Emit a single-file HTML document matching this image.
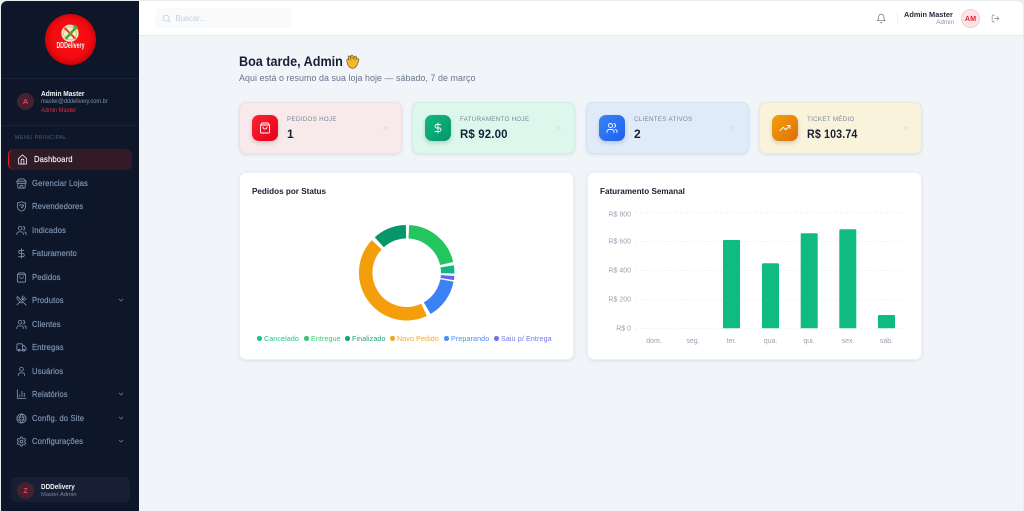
<!DOCTYPE html>
<html lang="pt-BR"><head><meta charset="utf-8"><title>Dashboard</title>
<style>
*{box-sizing:border-box}
html,body{margin:0;width:1024px;height:511px;overflow:hidden;background:#e9ebee;font-family:"Liberation Sans",sans-serif}
#app{position:absolute;left:1px;top:1px;width:1022px;height:510px;background:#f1f5f9;border-radius:6px 6px 0 0;overflow:hidden}
.abs,.t{position:absolute}
.t{white-space:nowrap;line-height:1;transform-origin:left center}
#side{position:absolute;left:0;top:0;width:138px;height:510px;background:#0e1729}
.hr{position:absolute;left:0;width:138px;height:1px;background:#17223a}
.nav{position:absolute;left:31px;margin-top:.5px;font-size:8.1px;color:#8397b5;line-height:10px;letter-spacing:.12px;white-space:nowrap;transform:scaleX(.95);transform-origin:left center;-webkit-text-stroke:.15px currentColor}
.ni{position:absolute;left:14.5px;width:11px;height:11px;fill:none;stroke:#8397b5;stroke-width:1.8;stroke-linecap:round;stroke-linejoin:round}
.ch{position:absolute;left:116px;width:8px;height:8px;fill:none;stroke:#71839f;stroke-width:2;stroke-linecap:round;stroke-linejoin:round}
#top{position:absolute;left:138px;top:0;width:884px;height:35px;background:#fff;border-bottom:1px solid #e6eaf0}
.card{position:absolute;top:101px;height:52px;border-radius:7px;box-shadow:0 1px 3px rgba(15,23,42,.09);border:1px solid rgba(148,163,184,.12)}
.ic{position:absolute;left:12px;top:12px;width:26px;height:26px;border-radius:7px;box-shadow:0 2px 4px rgba(15,23,42,.18)}
.ic svg{position:absolute;left:7px;top:7px;width:12px;height:12px;fill:none;stroke:#fff;stroke-width:1.8;stroke-linecap:round;stroke-linejoin:round}
.lb{position:absolute;left:47px;top:13px;font-size:6.6px;letter-spacing:.35px;color:#7b8698;white-space:nowrap;line-height:8px;transform:scaleX(.935);transform-origin:left center}
.val{position:absolute;left:47px;top:24px;font-size:12px;font-weight:700;color:#172033;white-space:nowrap;line-height:14px;letter-spacing:.15px;transform-origin:left center}
.ar{position:absolute;left:141.5px;top:22.5px;width:6px;height:6px;fill:none;stroke:#d3d9e1;stroke-width:2.6}
.panel{position:absolute;top:171px;width:335px;height:188px;background:#fff;border-radius:7px;box-shadow:0 1px 3px rgba(15,23,42,.09);border:1px solid #eef1f5}
.pt{position:absolute;left:12px;top:13px;font-size:8.7px;font-weight:700;color:#172033;line-height:10px;white-space:nowrap;transform:scaleX(.935);transform-origin:left center}
.lg{position:absolute;top:162px;font-size:7.1px;line-height:9px;white-space:nowrap;letter-spacing:.12px;opacity:.9}
.lg i{display:inline-block;width:4.5px;height:4.5px;border-radius:50%;margin-right:2.5px;vertical-align:.5px;background:currentColor}
</style></head><body>
<svg width="0" height="0" style="position:absolute">
<symbol id="home" viewBox="0 0 24 24"><path d="M3 10l9-8 9 8v10a2 2 0 0 1-2 2H5a2 2 0 0 1-2-2z"/><path d="M9 22v-8a3 3 0 0 1 6 0v8"/></symbol>
<symbol id="store" viewBox="0 0 24 24"><path d="m2 7 4.41-4.41A2 2 0 0 1 7.83 2h8.34a2 2 0 0 1 1.42.59L22 7"/><path d="M4 12v8a2 2 0 0 0 2 2h12a2 2 0 0 0 2-2v-8"/><path d="M15 22v-4a2 2 0 0 0-2-2h-2a2 2 0 0 0-2 2v4"/><path d="M2 7h20"/><path d="M22 7v3a2 2 0 0 1-2 2 2.7 2.7 0 0 1-2-1 2.7 2.7 0 0 1-2 1 2.7 2.7 0 0 1-2-1 2.7 2.7 0 0 1-2 1 2.7 2.7 0 0 1-2-1 2.7 2.7 0 0 1-2 1 2.7 2.7 0 0 1-2-1 2.7 2.7 0 0 1-2 1 2 2 0 0 1-2-2V7"/></symbol>
<symbol id="shield" viewBox="0 0 24 24"><path d="M21 12c0 6-4 8.500-8.700 10a1 1 0 0 1-.6 0C7 20.500 3 18 3 12V5a1 1 0 0 1 1-1c2.500 0 5.500-.8 7.400-2.200a1 1 0 0 1 1.200 0C14.500 3.200 17.500 4 20 4a1 1 0 0 1 1 1z"/><path d="M7 10l3-2 3 1.500 2-1.500 2 2-4 5-2-1.500"/></symbol>
<symbol id="users" viewBox="0 0 24 24"><path d="M16 21v-2a4 4 0 0 0-4-4H6a4 4 0 0 0-4 4v2"/><circle cx="9" cy="7" r="4"/><path d="M22 21v-2a4 4 0 0 0-3-3.870"/><path d="M16 3.130a4 4 0 0 1 0 7.750"/></symbol>
<symbol id="dollar" viewBox="0 0 24 24"><path d="M12 2v20"/><path d="M17 5H9.500a3.500 3.500 0 0 0 0 7h5a3.500 3.500 0 0 1 0 7H6"/></symbol>
<symbol id="bag" viewBox="0 0 24 24"><path d="M16 10a4 4 0 0 1-8 0"/><path d="M3.100 6h17.800"/><path d="M3.400 5.470a2 2 0 0 0-.4 1.200V20a2 2 0 0 0 2 2h14a2 2 0 0 0 2-2V6.670a2 2 0 0 0-.4-1.200l-2-2.670A2 2 0 0 0 17 2H7a2 2 0 0 0-1.600.8z"/></symbol>
<symbol id="utensils" viewBox="0 0 24 24"><path d="m16 2-2.300 2.300a3 3 0 0 0 0 4.200l1.800 1.800a3 3 0 0 0 4.200 0L22 8"/><path d="M15 15 3.300 3.300a4.200 4.200 0 0 0 0 6l7.300 7.300c.7.7 2 .7 2.800 0L15 15Zm0 0 7 7"/><path d="m2.100 21.800 6.400-6.300"/><path d="m19 5-7 7"/></symbol>
<symbol id="truck" viewBox="0 0 24 24"><path d="M14 18V6a2 2 0 0 0-2-2H4a2 2 0 0 0-2 2v11a1 1 0 0 0 1 1h2"/><path d="M15 18H9"/><path d="M19 18h2a1 1 0 0 0 1-1v-3.650a1 1 0 0 0-.22-.62l-3.480-4.350A1 1 0 0 0 17.520 8H14"/><circle cx="17" cy="18" r="2"/><circle cx="7" cy="18" r="2"/></symbol>
<symbol id="user" viewBox="0 0 24 24"><path d="M19 21v-2a4 4 0 0 0-4-4H9a4 4 0 0 0-4 4v2"/><circle cx="12" cy="7" r="4"/></symbol>
<symbol id="chart" viewBox="0 0 24 24"><path d="M3 2v18a1 1 0 0 0 1 1h18"/><path d="M8 17v-4"/><path d="M13 17V5"/><path d="M18 17V9"/></symbol>
<symbol id="globe" viewBox="0 0 24 24"><circle cx="12" cy="12" r="10"/><path d="M12 2a14.500 14.500 0 0 0 0 20 14.500 14.500 0 0 0 0-20"/><path d="M2 9h20M2 15h20"/></symbol>
<symbol id="gear" viewBox="0 0 24 24"><path d="M12.220 2h-.44a2 2 0 0 0-2 2v.18a2 2 0 0 1-1 1.730l-.43.25a2 2 0 0 1-2 0l-.15-.08a2 2 0 0 0-2.730.73l-.22.38a2 2 0 0 0 .73 2.730l.15.1a2 2 0 0 1 1 1.720v.51a2 2 0 0 1-1 1.740l-.15.09a2 2 0 0 0-.73 2.730l.22.38a2 2 0 0 0 2.730.73l.15-.08a2 2 0 0 1 2 0l.43.25a2 2 0 0 1 1 1.730V20a2 2 0 0 0 2 2h.44a2 2 0 0 0 2-2v-.18a2 2 0 0 1 1-1.730l.43-.25a2 2 0 0 1 2 0l.15.08a2 2 0 0 0 2.730-.73l.22-.39a2 2 0 0 0-.73-2.730l-.15-.08a2 2 0 0 1-1-1.740v-.5a2 2 0 0 1 1-1.740l.15-.09a2 2 0 0 0 .73-2.730l-.22-.38a2 2 0 0 0-2.730-.73l-.15.08a2 2 0 0 1-2 0l-.43-.25a2 2 0 0 1-1-1.730V4a2 2 0 0 0-2-2z"/><circle cx="12" cy="12" r="3"/></symbol>
<symbol id="chev" viewBox="0 0 24 24"><path d="m6 9 6 6 6-6"/></symbol>
<symbol id="arrow" viewBox="0 0 24 24"><path d="M4 20 20 4"/><path d="M6 4h14v14"/></symbol>
</svg>

<div id="app">
<div id="side">
  <svg class="abs" style="left:43px;top:12px" width="53" height="53" viewBox="0 0 53 53">
    <defs><radialGradient id="rg" cx="50%" cy="48%" r="52%"><stop offset="0" stop-color="#ff0f14"/><stop offset=".72" stop-color="#f30a10"/><stop offset="1" stop-color="#c90409"/></radialGradient></defs>
    <circle cx="26.500" cy="26.500" r="25.500" fill="url(#rg)"/>
    <circle cx="26" cy="20.300" r="8.500" fill="#f3eddc" stroke="#b9b39d" stroke-width=".6"/>
    <circle cx="26" cy="20.300" r="6.500" fill="none" stroke="#e4c95a" stroke-width="1.200"/>
    <path d="M20.500 14.800l11 11" stroke="#e53935" stroke-width="2"/>
    <path d="M21.500 26l9.500-10.500" stroke="#55a52b" stroke-width="2.600"/>
    <path d="M29 13.500l3 3 2-2-3-3z" fill="#55a52b"/>
    <text x="26.500" y="35" text-anchor="middle" font-family="Liberation Sans" font-weight="700" font-size="8" fill="#fff" textLength="28" lengthAdjust="spacingAndGlyphs" style="filter:drop-shadow(.4px .6px 0 #7d0a0a)">DDDelivery</text>
  </svg>
  <div class="hr" style="top:77px"></div>
  <div class="abs" style="left:16px;top:92px;width:17px;height:17px;border-radius:50%;background:#472032;color:#f43f4e;font-size:7.500px;font-weight:700;text-align:center;line-height:17px">A</div>
  <div class="t" style="left:40px;top:88.500px;font-size:7.200px;font-weight:700;color:#f1f5f9;transform:scaleX(.915)">Admin Master</div>
  <div class="t" style="left:40px;top:97.500px;font-size:6.300px;color:#7f90aa;transform:scaleX(.89)">master@dddelivery.com.br</div>
  <div class="t" style="left:40px;top:106.500px;font-size:6.200px;color:#e8283a;transform:scaleX(.92)">Admin Master</div>
  <div class="hr" style="top:124px"></div>
  <div class="t" style="left:14px;top:135px;font-size:5.700px;letter-spacing:.55px;color:#4e5f7a;transform:scaleX(.93)">MENU PRINCIPAL</div>

  <div class="abs" style="left:7px;top:148px;width:124px;height:21px;background:#331a29;border-radius:6px;border-left:1.500px solid #e11d2e"></div>
  <svg class="ni" style="top:153px;left:15.500px;stroke:#e8edf4"><use href="#home"/></svg>
  <div class="nav" style="top:153.500px;left:32.500px;color:#f1f5f9">Dashboard</div>

  <svg class="ni" style="top:177px"><use href="#store"/></svg><div class="nav" style="top:177px">Gerenciar Lojas</div>
  <svg class="ni" style="top:200px"><use href="#shield"/></svg><div class="nav" style="top:200.500px">Revendedores</div>
  <svg class="ni" style="top:224px"><use href="#users"/></svg><div class="nav" style="top:224px">Indicados</div>
  <svg class="ni" style="top:247px"><use href="#dollar"/></svg><div class="nav" style="top:247.500px">Faturamento</div>
  <svg class="ni" style="top:271px"><use href="#bag"/></svg><div class="nav" style="top:271px">Pedidos</div>
  <svg class="ni" style="top:294px"><use href="#utensils"/></svg><div class="nav" style="top:294.500px">Produtos</div><svg class="ch" style="top:295px"><use href="#chev"/></svg>
  <svg class="ni" style="top:318px"><use href="#users"/></svg><div class="nav" style="top:318px">Clientes</div>
  <svg class="ni" style="top:341px"><use href="#truck"/></svg><div class="nav" style="top:341.500px">Entregas</div>
  <svg class="ni" style="top:365px"><use href="#user"/></svg><div class="nav" style="top:365px">Usuários</div>
  <svg class="ni" style="top:388px"><use href="#chart"/></svg><div class="nav" style="top:388.500px">Relatórios</div><svg class="ch" style="top:389px"><use href="#chev"/></svg>
  <svg class="ni" style="top:412px"><use href="#globe"/></svg><div class="nav" style="top:412px">Config. do Site</div><svg class="ch" style="top:412.500px"><use href="#chev"/></svg>
  <svg class="ni" style="top:435px"><use href="#gear"/></svg><div class="nav" style="top:435.500px">Configurações</div><svg class="ch" style="top:436px"><use href="#chev"/></svg>

  <div class="abs" style="left:10px;top:476px;width:119px;height:25px;background:#161f33;border-radius:5px"></div>
  <div class="abs" style="left:16px;top:480.500px;width:17px;height:17px;border-radius:50%;background:#472032;color:#f43f4e;font-size:7.500px;font-weight:700;text-align:center;line-height:17px">Z</div>
  <div class="t" style="left:40px;top:481.500px;font-size:7.200px;font-weight:700;color:#f1f5f9;transform:scaleX(.88)">DDDelivery</div>
  <div class="t" style="left:40px;top:491.500px;font-size:5.800px;color:#7486a1">Master Admin</div>
</div>

<div id="top">
  <div class="abs" style="left:16px;top:7px;width:137px;height:20px;background:#f8fafc;border-radius:5px"></div>
  <svg class="abs" style="left:23px;top:13px;stroke:#c3ccd8;fill:none;stroke-width:2;stroke-linecap:round" width="9" height="9" viewBox="0 0 24 24"><circle cx="11" cy="11" r="8"/><path d="m21 21-4.300-4.300"/></svg>
  <div class="t" style="left:36.500px;top:13.500px;font-size:7.800px;color:#c8d0db">Buscar...</div>
  <svg class="abs" style="left:737px;top:12px;stroke:#5f6e84;fill:none;stroke-width:1.600;stroke-linecap:round;stroke-linejoin:round" width="10.500" height="11" viewBox="0 0 24 24"><path d="M6 8a6 6 0 0 1 12 0c0 7 3 9 3 9H3s3-2 3-9"/><path d="M10.300 21a1.940 1.940 0 0 0 3.400 0"/></svg>
  <div class="abs" style="left:758px;top:11px;width:1px;height:13px;background:#edf0f4"></div>
  <div class="t" style="left:765px;top:10px;font-size:7.400px;font-weight:700;color:#1e293b">Admin Master</div>
  <div class="t" style="right:69px;top:19px;font-size:6.300px;color:#8a96a8">Admin</div>
  <div class="abs" style="left:822px;top:8px;width:19px;height:19px;border-radius:50%;background:#fde4e6;border:1px solid #fbc9cd;color:#ea1f2f;font-size:7.200px;font-weight:700;text-align:center;line-height:17px">AM</div>
  <svg class="abs" style="left:852px;top:13px;stroke:#7b8899;fill:none;stroke-width:1.700;stroke-linecap:round;stroke-linejoin:round" width="9" height="9" viewBox="0 0 24 24"><path d="M9 21H5a2 2 0 0 1-2-2V5a2 2 0 0 1 2-2h4"/><path d="M16 17l5-5-5-5"/><path d="M21 12H9"/></svg>
</div>

<div class="t" style="left:238px;top:53px;font-size:14px;font-weight:700;color:#172033;transform:scaleX(.9)">Boa tarde, Admin</div>
<svg class="abs" style="left:344px;top:53px" width="15" height="15" viewBox="0 0 15 15"><path d="M2 8Q1 5 3 5L4 6 3 3Q3 1.500 4.800 2L6 4.500 5.800 2Q6 .8 7.600 1.200L9 4 9.500 2.500Q10.500 1.500 11.500 2.800L11.500 5 13 4.500Q14.300 5 13.800 6.500L12.500 10Q11 14.500 7 14.300 3.500 14 2 8z" fill="#f5b92e" stroke="#6b4a12" stroke-width=".6"/><path d="M5 3.500l1.500 3M7.500 3l1 3M10 4l.2 2.500" stroke="#8a6112" stroke-width=".5" fill="none"/></svg>
<div class="t" style="left:238px;top:73px;font-size:9.600px;color:#66738a;letter-spacing:.06px;transform:scaleX(.925)">Aqui está o resumo da sua loja hoje — sábado, 7 de março</div>

<div class="card" style="left:238px;width:163px;background:#f8e9ea">
  <div class="ic" style="background:linear-gradient(135deg,#ff2230,#e3001b)"><svg><use href="#bag"/></svg></div>
  <div class="lb">PEDIDOS HOJE</div><div class="val">1</div>
  <svg class="ar"><use href="#arrow"/></svg>
</div>
<div class="card" style="left:411px;width:163px;background:#dcf7eb">
  <div class="ic" style="background:linear-gradient(135deg,#10b981,#059669)"><svg><use href="#dollar"/></svg></div>
  <div class="lb">FATURAMENTO HOJE</div><div class="val" style="transform:scaleX(.955)">R$ 92.00</div>
  <svg class="ar"><use href="#arrow"/></svg>
</div>
<div class="card" style="left:585px;width:163px;background:#e0ebfa">
  <div class="ic" style="background:linear-gradient(135deg,#3b82f6,#1a62f0)"><svg><use href="#users"/></svg></div>
  <div class="lb">CLIENTES ATIVOS</div><div class="val">2</div>
  <svg class="ar"><use href="#arrow"/></svg>
</div>
<div class="card" style="left:758px;width:163px;background:#f9f3dc">
  <div class="ic" style="background:linear-gradient(135deg,#f59e0b,#dd6f06)"><svg viewBox="0 0 24 24"><path d="M22 7l-8.500 8.500-5-5L2 17"/><path d="M16 7h6v6"/></svg></div>
  <div class="lb">TICKET MÉDIO</div><div class="val" style="transform:scaleX(.89)">R$ 103.74</div>
  <svg class="ar"><use href="#arrow"/></svg>
</div>

<div class="panel" style="left:238px">
  <div class="pt">Pedidos por Status</div>
  <svg class="abs" style="left:0;top:0" width="333" height="186" fill="none" stroke-width="13.500">
    <g transform="translate(166.700 99.700)">
      <circle r="41" pathLength="360" stroke="#22c55e" stroke-dasharray="74 400" transform="rotate(-87)"/>
      <circle r="41" pathLength="360" stroke="#10b981" stroke-dasharray="10 400" transform="rotate(-9)"/>
      <circle r="41" pathLength="360" stroke="#6366f1" stroke-dasharray="5 400" transform="rotate(4)"/>
      <circle r="41" pathLength="360" stroke="#3b82f6" stroke-dasharray="49 400" transform="rotate(11)"/>
      <circle r="41" pathLength="360" stroke="#f59e0b" stroke-dasharray="158 400" transform="rotate(65)"/>
      <circle r="41" pathLength="360" stroke="#059669" stroke-dasharray="41 400" transform="rotate(228)"/>
    </g>
  </svg>
  <div class="lg" style="left:17px;color:#10b981"><i></i>Cancelado</div>
  <div class="lg" style="left:64px;color:#22c55e"><i></i>Entregue</div>
  <div class="lg" style="left:105px;color:#059669"><i></i>Finalizado</div>
  <div class="lg" style="left:150px;color:#f59e0b"><i></i>Novo Pedido</div>
  <div class="lg" style="left:204px;color:#3b82f6"><i></i>Preparando</div>
  <div class="lg" style="left:254px;color:#6366f1"><i></i>Saiu p/ Entrega</div>
</div>

<div class="panel" style="left:586px">
  <div class="pt">Faturamento Semanal</div>
  <svg class="abs" style="left:-1px;top:-1px" width="335" height="188" viewBox="587 172 335 188">
    <g stroke="#eceff3" stroke-width=".8" stroke-dasharray="2.500 2.500" fill="none">
      <path d="M635 212.700H906M635 241.500H906M635 270.500H906M635 299.500H906M635 328.300H906"/>
    </g>
    <g fill="#10bb82">
      <path d="M723 328.300V241a1 1 0 0 1 1-1h15a1 1 0 0 1 1 1v87.300z"/>
      <path d="M762 328.300V264.300a1 1 0 0 1 1-1h15a1 1 0 0 1 1 1v64z"/>
      <path d="M800.700 328.300V234.300a1 1 0 0 1 1-1h15a1 1 0 0 1 1 1v94z"/>
      <path d="M839.300 328.300V230.300a1 1 0 0 1 1-1h15a1 1 0 0 1 1 1v98z"/>
      <path d="M878 328.300V316a1 1 0 0 1 1-1h15a1 1 0 0 1 1 1v12.300z"/>
    </g>
    <g font-family="Liberation Sans" font-size="7" fill="#98a2b1" text-anchor="end">
      <text x="631" y="216.500">R$ 800</text><text x="631" y="243.700">R$ 600</text><text x="631" y="272.700">R$ 400</text><text x="631" y="301.500">R$ 200</text><text x="631" y="330.500">R$ 0</text>
    </g>
    <g font-family="Liberation Sans" font-size="7" fill="#98a2b1" text-anchor="middle">
      <text x="654" y="343">dom.</text><text x="693" y="343">seg.</text><text x="731.500" y="343">ter.</text><text x="770.500" y="343">qua.</text><text x="809" y="343">qui.</text><text x="848" y="343">sex.</text><text x="886.500" y="343">sáb.</text>
    </g>
  </svg>
</div>
</div>
</body></html>
